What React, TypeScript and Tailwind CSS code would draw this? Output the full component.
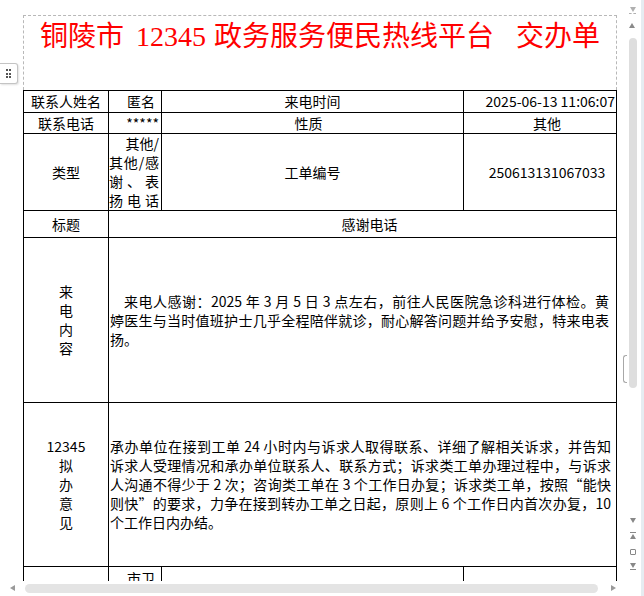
import React from "react";

const J = "text-justify [text-align-last:justify] whitespace-nowrap";

function Tri({ dir, cls }: { dir: "up" | "down" | "left" | "right"; cls?: string }) {
  const pts: Record<string, string> = {
    up: "0,5 3,0 6,5",
    down: "0,0 6,0 3,5",
    left: "5,0 5,6 0,3",
    right: "0,0 0,6 5,3",
  };
  const w = dir === "left" || dir === "right" ? 5 : 6;
  const h = dir === "left" || dir === "right" ? 6 : 5;
  return (
    <svg width={w} height={h} viewBox={`0 0 ${w} ${h}`} className={cls}>
      <polygon points={pts[dir]} fill="currentColor" />
    </svg>
  );
}

export default function App() {
  return (
    <div className="relative w-[644px] h-[596px] overflow-hidden bg-white text-black font-['Noto_Sans_CJK_SC',sans-serif]">
      <div className="flex h-[581px]">
        {/* document viewport */}
        <div className="relative w-[622px] h-full overflow-hidden">
          <div className="pt-[15px] pl-[23px]">
            <div className="w-[594px] h-[75px] border-t border-l border-r border-dashed border-[#b8b8b8] flex justify-center pt-[3px]">
              <div className="flex items-center h-[36px] text-[28px] leading-[36px] text-[#ff0000] font-['Liberation_Serif','Noto_Sans_CJK_SC',serif] whitespace-nowrap">
                <span>铜陵市</span>
                <span className="ml-[12px]">12345</span>
                <span className="ml-[8px]">政务服务便民热线平台</span>
                <span className="ml-[22px]">交办单</span>
              </div>
            </div>
            <table className="table-fixed border-collapse w-[593px] text-[14px] leading-[19px]">
              <colgroup>
                <col className="w-[85px]" />
                <col className="w-[53px]" />
                <col className="w-[302px]" />
                <col className="w-[153px]" />
              </colgroup>
              <tbody>
                <tr className="h-[22px]">
                  <td className="border border-black text-center p-0">联系人姓名</td>
                  <td className="border border-black text-right pr-[6px] p-0">匿名</td>
                  <td className="border border-black text-center p-0">来电时间</td>
                  <td className="border border-black text-right pr-[1px] p-0 whitespace-nowrap">2025-06-13 11:06:07</td>
                </tr>
                <tr className="h-[21px]">
                  <td className="border border-black text-center p-0">联系电话</td>
                  <td className="border border-black text-right pr-[2px] p-0">*****</td>
                  <td className="border border-black text-center pr-[8px] p-0">性质</td>
                  <td className="border border-black text-center pl-[14px] p-0">其他</td>
                </tr>
                <tr className="h-[77px]">
                  <td className="border border-black text-center p-0">类型</td>
                  <td className="border border-black p-0 pr-[2px]">
                    <div className="text-right">其他/</div>
                    <div className={J}>其他/感</div>
                    <div className={J}>谢、表</div>
                    <div className={J}>扬电话</div>
                  </td>
                  <td className="border border-black text-center p-0">工单编号</td>
                  <td className="border border-black text-center pl-[14px] p-0">250613131067033</td>
                </tr>
                <tr className="h-[27px]">
                  <td className="border border-black text-center p-0">标题</td>
                  <td colSpan={3} className="border border-black text-center pl-[14px] p-0">感谢电话</td>
                </tr>
                <tr className="h-[165px]">
                  <td className="border border-black p-0">
                    <div className="flex flex-col items-center">
                      <span>来</span>
                      <span>电</span>
                      <span>内</span>
                      <span>容</span>
                    </div>
                  </td>
                  <td colSpan={3} className="border border-black p-0 pl-[1px] pr-[7px]">
                    <div className={J + " pl-[14px]"}>来电人感谢：2025 年 3 月 5 日 3 点左右，前往人民医院急诊科进行体检。黄</div>
                    <div className={J}>婷医生与当时值班护士几乎全程陪伴就诊，耐心解答问题并给予安慰，特来电表</div>
                    <div>扬。</div>
                  </td>
                </tr>
                <tr className="h-[164px]">
                  <td className="border border-black p-0">
                    <div className="flex flex-col items-center">
                      <span>12345</span>
                      <span>拟</span>
                      <span>办</span>
                      <span>意</span>
                      <span>见</span>
                    </div>
                  </td>
                  <td colSpan={3} className="border border-black p-0 pl-[1px] pr-[5px]">
                    <div className={J}>承办单位在接到工单 24 小时内与诉求人取得联系、详细了解相关诉求，并告知</div>
                    <div className={J}>诉求人受理情况和承办单位联系人、联系方式；诉求类工单办理过程中，与诉求</div>
                    <div className={J}>人沟通不得少于 2 次；咨询类工单在 3 个工作日办复；诉求类工单，按照“能快</div>
                    <div className={J}>则快”的要求，力争在接到转办工单之日起，原则上 6 个工作日内首次办复，10</div>
                    <div>个工作日内办结。</div>
                  </td>
                </tr>
                <tr className="h-[40px]">
                  <td className="border border-black p-0"></td>
                  <td className="border border-black text-right pr-[6px] p-0 align-top pt-[2px]">市卫</td>
                  <td className="border border-black p-0"></td>
                  <td className="border border-black p-0"></td>
                </tr>
              </tbody>
            </table>
          </div>
          {/* side handle button */}
          <div className="absolute left-0 top-[63px] w-[18px] h-[21px] bg-white border border-l-0 border-[#c4c4c4] rounded-r-[3px] shadow-[1px_1px_2px_rgba(0,0,0,0.12)] flex items-center justify-center">
            <div className="grid grid-cols-2 gap-[1.5px]">
              {[0, 1, 2, 3, 4, 5].map((i) => (
                <span key={i} className="block w-[2px] h-[2px] bg-[#555]" />
              ))}
            </div>
          </div>
        </div>
        {/* vertical scrollbar */}
        <div className="relative w-[22px] h-full">
          <div className="absolute right-0 top-0 w-[3px] h-[596px] bg-[#e6ecf1]" />
          <div className="absolute left-[7px] top-[7px] flex flex-col items-center text-[#b0b0b0]">
            <Tri dir="down" />
            <div className="mt-[1px] w-[7px] border-t border-dashed border-[#b0b0b0]" />
          </div>
          <div className="absolute left-[7px] top-[23px] text-[#8a8a8a]">
            <Tri dir="up" />
          </div>
          <div className="absolute left-[7px] top-[38px] w-[8px] h-[350px] rounded-full bg-[#dedede]" />
          <div className="absolute left-[1px] top-[355px] w-[4px] h-[28px] rounded-l-[3px] border-l border-y border-[#a8a8a8]" />
          <div className="absolute left-[8px] top-[518px] text-[#888]">
            <Tri dir="down" />
          </div>
          <div className="absolute left-[8px] top-[532px] flex flex-col items-center text-[#888]">
            <div className="w-[6px] h-[1px] bg-[#888]" />
            <div className="mt-[1px]"><Tri dir="up" /></div>
          </div>
          <div className="absolute left-[8px] top-[549px] w-[6px] h-[6px] border border-[#888] rounded-[1px]" />
          <div className="absolute left-[8px] top-[563px] flex flex-col items-center text-[#888]">
            <Tri dir="down" />
            <div className="mt-[1px] w-[6px] h-[1px] bg-[#888]" />
          </div>
        </div>
      </div>
      {/* horizontal scrollbar */}
      <div className="relative h-[15px]">
        <div className="absolute left-[10px] top-[4px] text-[#9a9a9a]">
          <Tri dir="left" />
        </div>
        <div className="absolute left-[25px] top-[3px] w-[573px] h-[9px] rounded-full bg-[#e4e4e4]" />
        <div className="absolute left-[611px] top-[4px] text-[#9a9a9a]">
          <Tri dir="right" />
        </div>
      </div>
    </div>
  );
}
